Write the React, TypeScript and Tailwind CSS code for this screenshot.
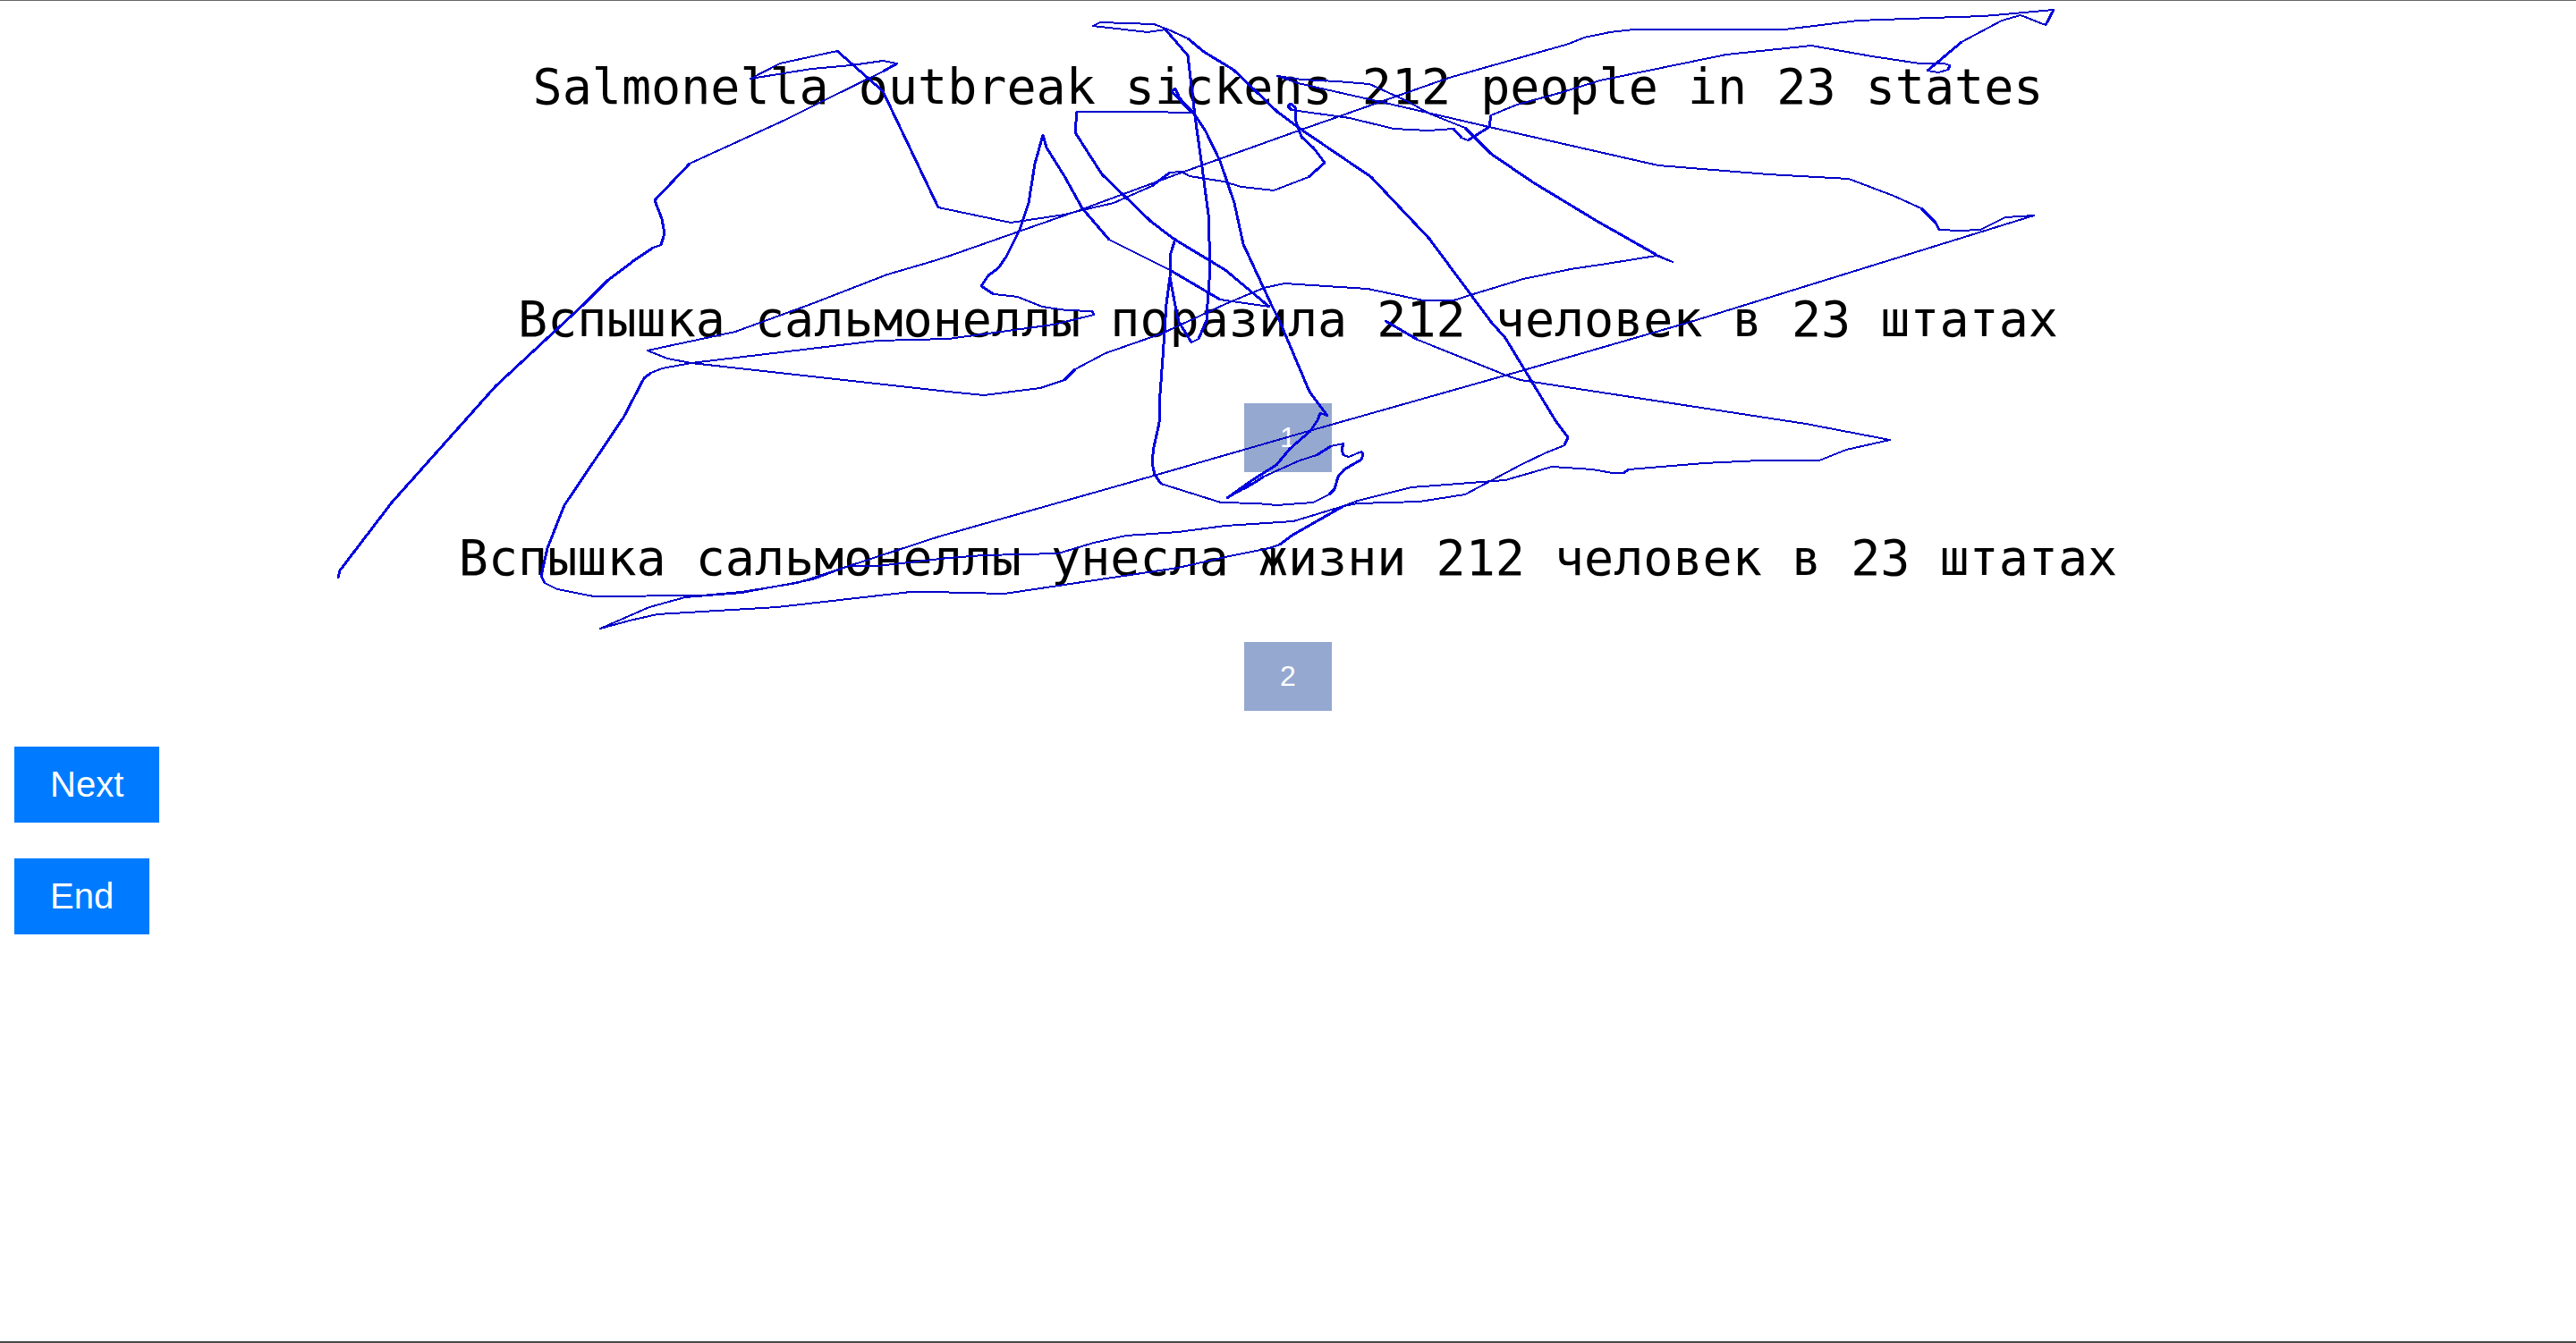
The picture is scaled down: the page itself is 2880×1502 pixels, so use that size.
type Point = [number, number];

const trail: Point[] = [
  [378, 646], [380, 638], [438, 562], [554, 432], [653, 340], [679, 314], [708, 292], [730, 277], [739, 274], [743, 261],
  [740, 245], [732, 224], [771, 183], [878, 134], [920, 113], [987, 80], [1003, 71], [987, 68], [952, 73], [907, 77],
  [839, 88], [872, 71], [936, 57], [987, 102], [1049, 232], [1130, 249], [1190, 240], [1210, 235], [1245, 227], [1288, 208],
  [1308, 193], [1321, 192], [1330, 197], [1368, 203], [1388, 209], [1424, 213], [1463, 198], [1481, 182], [1469, 166], [1455, 153],
  [1448, 133], [1448, 120], [1443, 116], [1440, 119], [1444, 123], [1509, 132], [1558, 144], [1597, 146], [1625, 144], [1634, 154],
  [1641, 157], [1665, 142], [1667, 129], [1696, 117], [1740, 105], [1789, 90], [1930, 61], [2025, 51], [2093, 63], [2146, 71],
  [2173, 71], [2180, 73], [2178, 78], [2167, 81], [2155, 79], [2193, 47], [2238, 23], [2259, 17], [2287, 28], [2296, 11],
  [2218, 18], [2160, 20], [2077, 23], [1995, 33], [1827, 33], [1800, 36], [1771, 42], [1754, 49], [1740, 53], [1620, 87],
  [1455, 145], [1321, 193], [1210, 234], [1062, 286], [1040, 293], [992, 307], [907, 340], [822, 371], [724, 392], [746, 401],
  [773, 406], [1060, 438], [1100, 442], [1163, 434], [1190, 425], [1202, 413], [1236, 395], [1299, 373], [1370, 340], [1413, 322],
  [1436, 317], [1529, 323], [1591, 336], [1625, 336], [1647, 329], [1703, 312], [1756, 301], [1796, 295], [1852, 286], [1870, 293],
  [1852, 285], [1785, 247], [1714, 204], [1667, 172], [1638, 143], [1598, 127], [1573, 113], [1531, 94], [1495, 91], [1455, 89],
  [1428, 85], [1451, 93], [1544, 114], [1665, 142], [1700, 150], [1854, 185], [1977, 195], [2067, 200], [2117, 219], [2148, 233],
  [2164, 249], [2168, 257], [2191, 258], [2214, 257], [2242, 243], [2274, 241], [1890, 360], [1700, 415], [1460, 483], [1290, 532],
  [1050, 600], [949, 633], [891, 652], [829, 662], [784, 666], [664, 667], [623, 659], [609, 652], [605, 644], [612, 613],
  [631, 565], [697, 467], [720, 423], [728, 417], [740, 412], [773, 406], [981, 381], [1060, 379], [1178, 363], [1223, 352],
  [1221, 348], [1192, 347], [1165, 343], [1138, 332], [1111, 329], [1097, 320], [1105, 308], [1116, 300], [1125, 287], [1140, 257],
  [1150, 227], [1157, 183], [1166, 151], [1170, 165], [1190, 197], [1210, 233], [1240, 268], [1308, 302], [1364, 335], [1419, 343],
  [1370, 302], [1312, 267], [1286, 247], [1257, 219], [1232, 195], [1202, 148], [1204, 125], [1279, 125], [1332, 126], [1310, 102],
  [1314, 99], [1319, 110], [1335, 127], [1348, 147], [1364, 180], [1380, 227], [1390, 273], [1422, 342], [1431, 360], [1464, 438],
  [1484, 465], [1476, 462], [1473, 470], [1465, 482], [1442, 502], [1427, 520], [1400, 537], [1372, 557], [1390, 547], [1402, 540],
  [1413, 533], [1453, 515], [1472, 509], [1488, 499], [1502, 496], [1500, 503], [1502, 509], [1508, 511], [1522, 505], [1524, 508],
  [1522, 514], [1503, 525], [1496, 533], [1492, 547], [1486, 553], [1468, 562], [1427, 565], [1405, 563], [1365, 562], [1298, 541],
  [1291, 531], [1288, 517], [1290, 500], [1296, 473], [1297, 440], [1300, 400], [1304, 340], [1308, 310], [1309, 283], [1314, 267],
  [1309, 283], [1308, 310], [1316, 353], [1318, 360], [1332, 383], [1340, 379], [1349, 358], [1350, 340], [1353, 300], [1351, 240],
  [1344, 187], [1336, 130], [1328, 62], [1303, 33], [1283, 36], [1222, 29], [1230, 25], [1290, 27], [1306, 33], [1328, 43],
  [1346, 58], [1379, 78], [1428, 125], [1455, 145], [1533, 198], [1598, 267], [1667, 360], [1683, 378], [1740, 472], [1753, 489],
  [1749, 498], [1727, 507], [1700, 520], [1638, 553], [1587, 561], [1518, 563], [1502, 566], [1444, 599], [1431, 609], [1419, 613],
  [1370, 623], [1317, 635], [1123, 664], [1040, 662], [1018, 662], [869, 679], [735, 687], [704, 694], [671, 703], [726, 679],
  [766, 668], [829, 663], [909, 648], [949, 633], [981, 633], [1060, 624], [1100, 621], [1183, 619], [1223, 607], [1259, 599],
  [1317, 595], [1370, 588], [1446, 583], [1502, 566], [1518, 560], [1578, 545], [1683, 537], [1735, 522], [1780, 525], [1803, 529],
  [1815, 529], [1821, 525], [1905, 518], [1968, 515], [2034, 515], [2064, 503], [2113, 492], [2019, 474], [1700, 425], [1687, 421],
  [1585, 380], [1549, 359],
];

// Steep strokes are drawn heavier than flat ones.
function trailPath(heavy: boolean) {
  let d = "";
  for (let i = 1; i < trail.length; i++) {
    const [ax, ay] = trail[i - 1];
    const [bx, by] = trail[i];
    const steep = Math.abs(by - ay) > 0.56 * Math.abs(bx - ax);
    if (steep === heavy) d += `M${ax} ${ay}L${bx} ${by}`;
  }
  return d;
}

function GazeTrail() {
  return (
    <svg
      className="pointer-events-none absolute inset-x-0 top-0 w-full"
      viewBox="0 1 2880 1499"
      fill="none"
      strokeLinecap="round"
      shapeRendering="crispEdges"
      aria-hidden="true"
    >
      <path d={trailPath(false)} stroke="#0000c8" strokeWidth={2} />
      <path d={trailPath(true)} stroke="#0000e0" strokeWidth={3} />
    </svg>
  );
}

function Sentence({ lang, children }: { lang: string; children: string }) {
  return (
    <p
      lang={lang}
      className="text-center font-['DejaVu_Sans_Mono',monospace] text-[55px] leading-[72px]"
    >
      {children}
    </p>
  );
}

function Choice({ text, label }: { text: string; label: string }) {
  return (
    <div className="flex flex-col items-center gap-[58px]">
      <Sentence lang="ru">{text}</Sentence>
      <button type="button" className="bg-[#94a8d0] px-10 py-5 text-[32px] leading-[37px] text-white">
        {label}
      </button>
    </div>
  );
}

function Action({ label }: { label: string }) {
  return (
    <button type="button" className="bg-[#007bff] px-10 py-5 text-[40px] leading-[45px] text-white">
      {label}
    </button>
  );
}

export default function App() {
  return (
    <main className="relative flex min-h-screen flex-col border-t border-b-2 border-t-[#666666] border-b-[#48484a] bg-white px-4 pt-[60px] font-['Liberation_Sans',Arial,sans-serif] text-black">
      <Sentence lang="en">Salmonella outbreak sickens 212 people in 23 states</Sentence>
      <div className="mt-[188px] flex flex-col gap-[60px]">
        <Choice text="Вспышка сальмонеллы поразила 212 человек в 23 штатах" label="1" />
        <Choice text="Вспышка сальмонеллы унесла жизни 212 человек в 23 штатах" label="2" />
      </div>
      <div className="mt-10 flex flex-col items-start gap-10">
        <Action label="Next" />
        <Action label="End" />
      </div>
      <GazeTrail />
    </main>
  );
}
